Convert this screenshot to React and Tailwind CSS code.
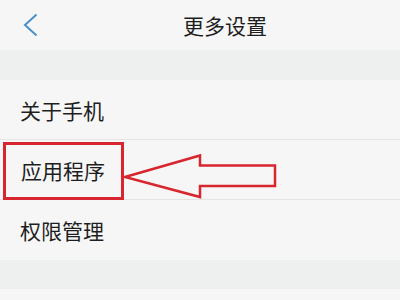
import React from "react";

export default function App() {
  const font = { fontFamily: '"Noto Sans CJK SC", "Noto Sans", sans-serif' };
  return (
    <div className="relative w-[400px] h-[300px] overflow-hidden bg-[#f6f6f6] text-[#1e1e1e]" style={font}>
      <div className="flex h-[50px] items-center">
        <div className="flex w-[60px] items-center pl-[22px]">
          <svg width="16" height="24" viewBox="0 0 16 24" fill="none">
            <path d="M14.5 1.5 L3 12 L14.5 22.5" stroke="#4a90c8" strokeWidth="2" strokeLinejoin="miter" />
          </svg>
        </div>
        <div className="pl-[123px] text-[21px] leading-none">更多设置</div>
      </div>
      <div className="h-[30px] bg-[#eeefef]" />
      <div className="flex h-[60px] items-center border-b border-[#e4e4e4] pl-[20px] pt-[3px] text-[21px]">关于手机</div>
      <div className="flex h-[60px] items-center border-b border-[#e4e4e4] pl-[21px] pt-[2px] text-[21px]">应用程序</div>
      <div className="flex h-[60px] items-center pl-[20px] pt-[2px] text-[21px]">权限管理</div>
      <div className="h-[29px] bg-[#eeefef]" />
      <svg className="absolute left-0 top-0" width="400" height="300" viewBox="0 0 400 300" fill="none">
        <rect x="4.5" y="143.5" width="118" height="55" stroke="#d7262f" strokeWidth="3" />
        <polygon
          points="125,177 200,155.5 200,165.5 275,165.5 275,186 200,186 200,197"
          stroke="#d7262f"
          strokeWidth="2.5"
          strokeLinejoin="miter"
        />
      </svg>
    </div>
  );
}
